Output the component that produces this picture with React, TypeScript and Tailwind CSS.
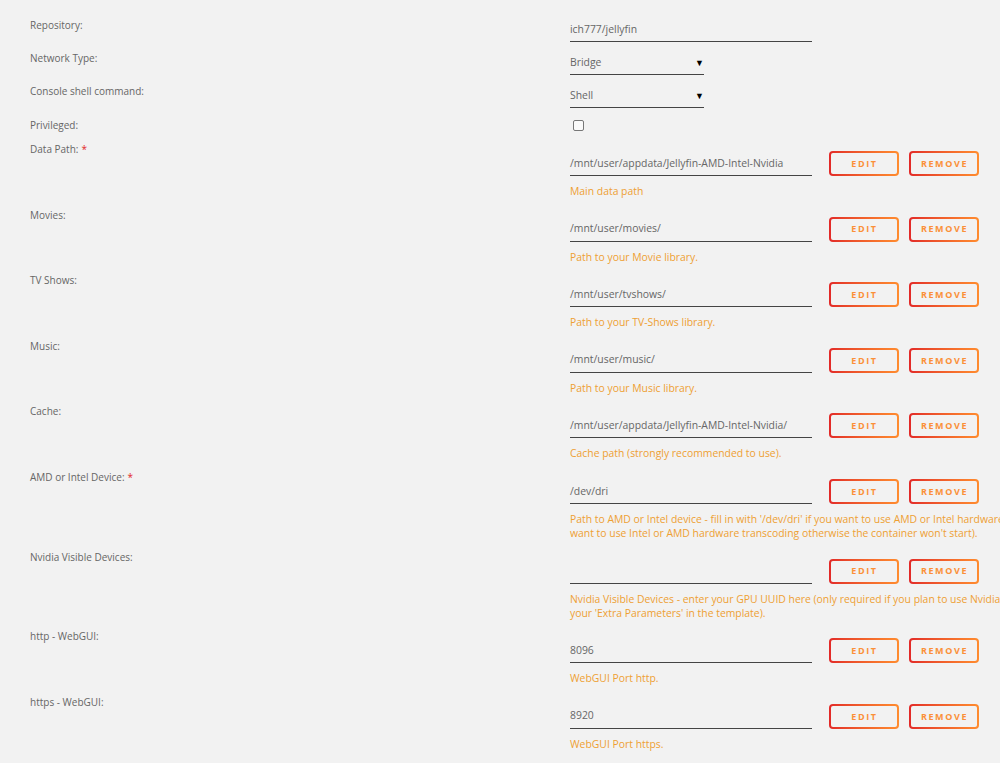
import React from "react";

const font = { fontFamily: '"Open Sans", "Liberation Sans", sans-serif' };

type PathRow = {
  label: string;
  value: string;
  help: string[];
  required?: boolean;
};

const paths: PathRow[] = [
  {
    label: "Data Path:",
    value: "/mnt/user/appdata/Jellyfin-AMD-Intel-Nvidia",
    help: ["Main data path"],
    required: true,
  },
  { label: "Movies:", value: "/mnt/user/movies/", help: ["Path to your Movie library."] },
  { label: "TV Shows:", value: "/mnt/user/tvshows/", help: ["Path to your TV-Shows library."] },
  { label: "Music:", value: "/mnt/user/music/", help: ["Path to your Music library."] },
  {
    label: "Cache:",
    value: "/mnt/user/appdata/Jellyfin-AMD-Intel-Nvidia/",
    help: ["Cache path (strongly recommended to use)."],
  },
  {
    label: "AMD or Intel Device:",
    value: "/dev/dri",
    required: true,
    help: [
      "Path to AMD or Intel device - fill in with '/dev/dri' if you want to use AMD or Intel hardware transcoding (please delete this path if you don't",
      "want to use Intel or AMD hardware transcoding otherwise the container won't start).",
    ],
  },
  {
    label: "Nvidia Visible Devices:",
    value: "",
    help: [
      "Nvidia Visible Devices - enter your GPU UUID here (only required if you plan to use Nvidia hardware transcoding, also don't forget to add '--runtime=nvidia' to",
      "your 'Extra Parameters' in the template).",
    ],
  },
  { label: "http - WebGUI:", value: "8096", help: ["WebGUI Port http."] },
  { label: "https - WebGUI:", value: "8920", help: ["WebGUI Port https."] },
];

const Label = ({ text, required }: { text: string; required?: boolean }) => (
  <div className="w-[540px] shrink-0 text-[10px] leading-[14px] text-[#666]">
    {text}
    {required && <span className="ml-[3px] text-[#e22828]">*</span>}
  </div>
);

const GradButton = ({ name }: { name: string }) => (
  <div className="h-[25px] w-[70px] rounded-[4px] bg-gradient-to-r from-[#e22828] to-[#ff8c2f] p-[2px]">
    <div className="flex h-full w-full items-center justify-center rounded-[2px] bg-[#f2f2f2] pl-[1px] text-[9px] font-bold tracking-[1.6px] text-[#fb9038]">
      {name}
    </div>
  </div>
);

const SimpleSelect = ({ value }: { value: string }) => (
  <div className="flex h-[25px] w-[134px] items-center justify-between border-b border-[#444] pt-[1px] text-[10.4px] text-[#666]">
    <span>{value}</span>
    <span className="text-[9px] text-black">▼</span>
  </div>
);

const App = () => {
  return (
    <div className="min-h-screen w-full overflow-hidden bg-[#f2f2f2] pl-[30px] pt-[17px]" style={font}>
      <div className="mb-[8px] flex">
        <div className="pt-[1px]">
          <Label text="Repository:" />
        </div>
        <div className="flex h-[25px] w-[242px] items-center border-b border-[#444] pt-[1px] text-[10.4px] text-[#666]">
          ich777/jellyfin
        </div>
      </div>
      <div className="mb-[8px] flex">
        <div className="pt-[1px]">
          <Label text="Network Type:" />
        </div>
        <SimpleSelect value="Bridge" />
      </div>
      <div className="mb-[8px] flex">
        <div className="pt-[1px]">
          <Label text="Console shell command:" />
        </div>
        <SimpleSelect value="Shell" />
      </div>
      <div className="flex h-[26px]">
        <div className="pt-[2px]">
          <Label text="Privileged:" />
        </div>
        <div className="ml-[3px] mt-[4px] h-[11px] w-[11px] rounded-[2px] border border-[#777] bg-[#fafafa]" />
      </div>

      {paths.map((p) => (
        <div key={p.label} className="flex pb-[9.6px]">
          <Label text={p.label} required={p.required} />
          <div className="pt-[9px]">
            <div className="flex items-center">
              <div className="flex h-[25px] w-[242px] items-center border-b border-[#444] pt-[1px] text-[10.4px] text-[#666]">
                {p.value}
              </div>
              <div className="ml-[17px] flex gap-[10px]">
                <GradButton name="EDIT" />
                <GradButton name="REMOVE" />
              </div>
            </div>
            <div className="mt-[8px] whitespace-nowrap text-[10.4px] leading-[14px] text-[#eea033]">
              {p.help.map((h, i) => (
                <div key={i}>{h}</div>
              ))}
            </div>
          </div>
        </div>
      ))}
    </div>
  );
};

export default App;
